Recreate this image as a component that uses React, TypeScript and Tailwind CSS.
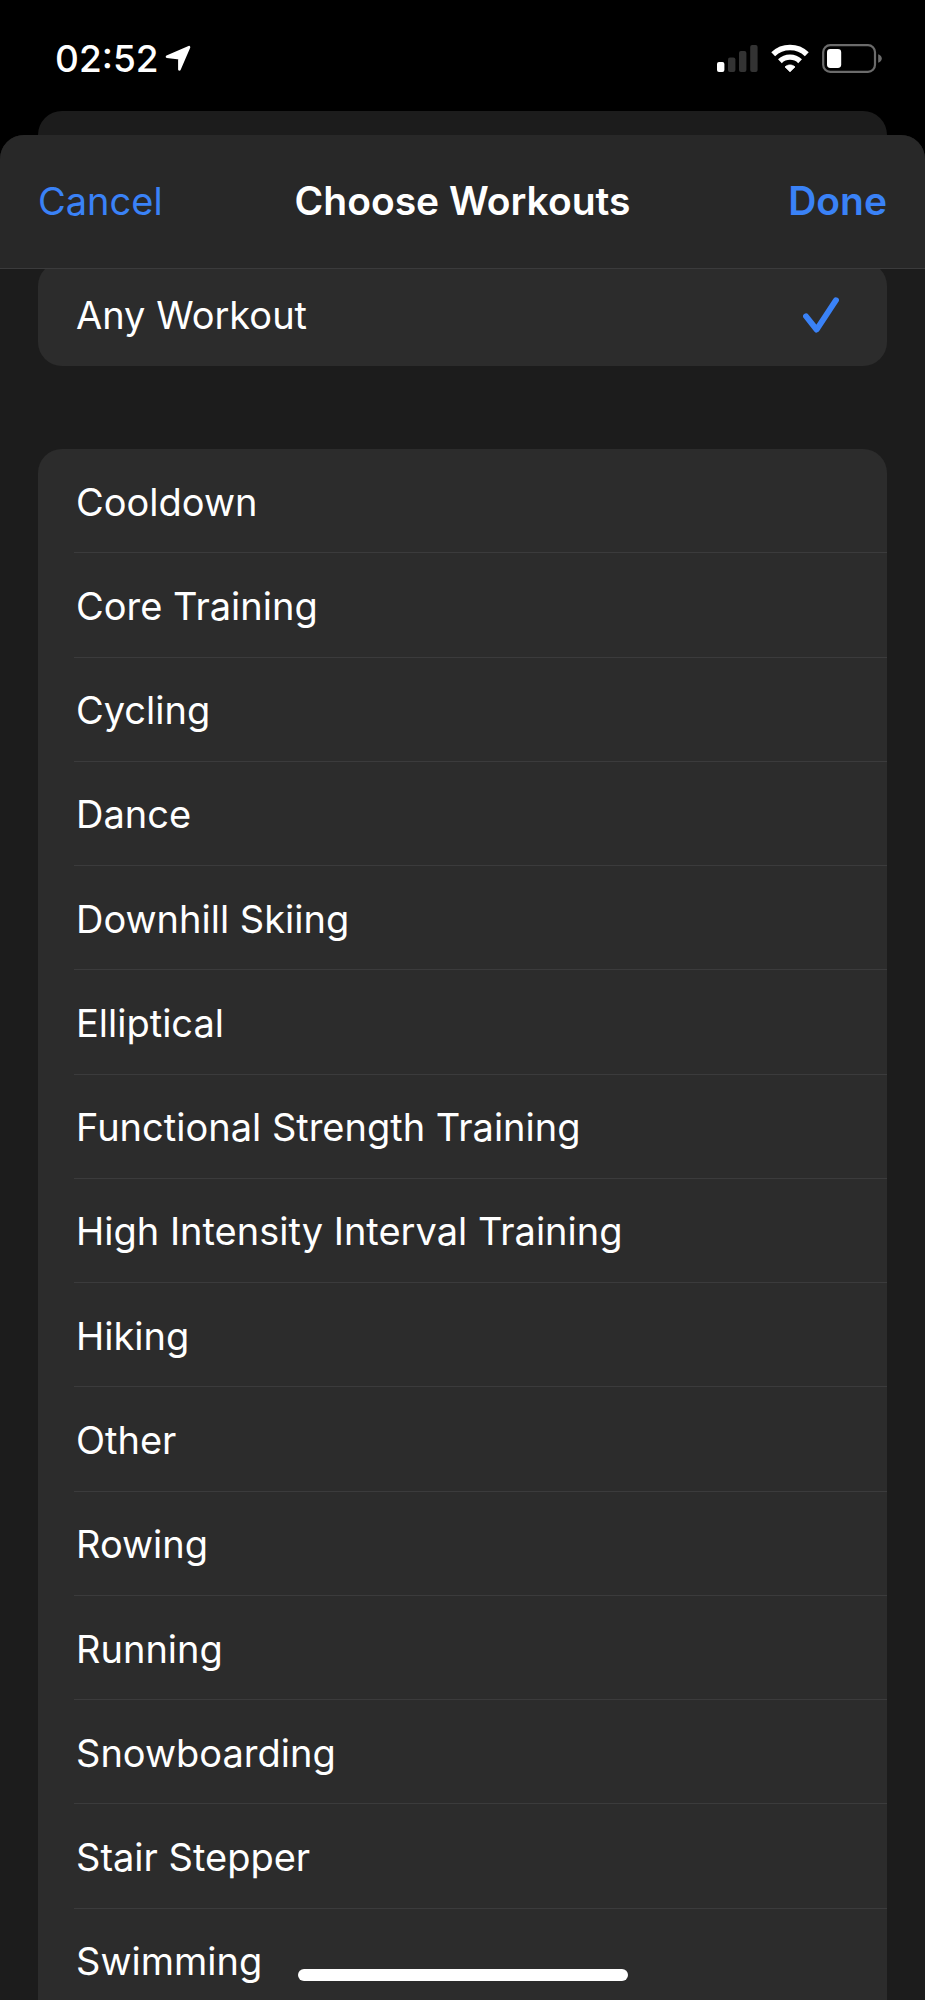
import { useState } from "react";

const ANY = "Any Workout";

const WORKOUTS = [
  "Cooldown",
  "Core Training",
  "Cycling",
  "Dance",
  "Downhill Skiing",
  "Elliptical",
  "Functional Strength Training",
  "High Intensity Interval Training",
  "Hiking",
  "Other",
  "Rowing",
  "Running",
  "Snowboarding",
  "Stair Stepper",
  "Swimming",
];

function LocationArrow() {
  return (
    <svg width="26" height="27" viewBox="0 0 26 27" aria-hidden="true">
      <path
        d="M2 11.6 24 2.2 14.4 24.4V13.2Z"
        fill="white"
        stroke="white"
        strokeWidth="2.6"
        strokeLinejoin="round"
      />
    </svg>
  );
}

function SignalBars() {
  return (
    <svg width="41" height="29" viewBox="0 0 41 29" aria-hidden="true">
      <rect x="0" y="18" width="7.4" height="10" rx="2" fill="white" />
      <rect x="11" y="13.6" width="7.4" height="14.4" rx="2" fill="#333333" />
      <rect x="22" y="7" width="7.4" height="21" rx="2" fill="#333333" />
      <rect x="33.2" y="1" width="7.4" height="27" rx="2" fill="#333333" />
    </svg>
  );
}

function WifiIcon() {
  return (
    <svg width="38" height="29" viewBox="0 0 38 29" fill="none" aria-hidden="true">
      <path d="M2.2 10.2A24.4 24.4 0 0 1 35.8 10.2" stroke="white" strokeWidth="5.6" />
      <path d="M8.9 17.2A14.6 14.6 0 0 1 29.1 17.2" stroke="white" strokeWidth="5.4" />
      <path
        d="M14 22.9C17 20.3 21 20.3 24 22.9L19 27.8Z"
        fill="white"
        stroke="white"
        strokeWidth="0.8"
        strokeLinejoin="round"
      />
    </svg>
  );
}

function BatteryIcon() {
  return (
    <svg width="60" height="29" viewBox="0 0 60 29" fill="none" aria-hidden="true">
      <rect x="1.2" y="1.2" width="51.8" height="26.6" rx="7" stroke="#6b6b6b" strokeWidth="2.2" />
      <rect x="5" y="5" width="14.2" height="19" rx="3.4" fill="white" />
      <path d="M56.2 10.2C58.6 11 59.8 12.8 59.8 14.5S58.6 18 56.2 18.8Z" fill="#6b6b6b" />
    </svg>
  );
}

function Checkmark() {
  return (
    <svg width="36" height="36" viewBox="0 0 36 36" fill="none" aria-hidden="true">
      <path
        d="M3 19.2 13.6 32.6 33 3.2"
        stroke="#3a82f7"
        strokeWidth="5.8"
        strokeLinecap="round"
        strokeLinejoin="round"
      />
    </svg>
  );
}

function WorkoutRow({
  name,
  checked,
  divider,
  onSelect,
}: {
  name: string;
  checked: boolean;
  divider: boolean;
  onSelect: () => void;
}) {
  return (
    <li className="flex min-h-[104px] flex-1 pl-9">
      <button
        type="button"
        aria-pressed={checked}
        onClick={onSelect}
        className={`flex flex-1 items-center justify-between pt-0.5 pr-12 pl-0.5 text-left ${
          divider ? "border-b border-[#3b3b3c]" : ""
        }`}
      >
        <span>{name}</span>
        {checked && <Checkmark />}
      </button>
    </li>
  );
}

export default function App() {
  const [selected, setSelected] = useState(ANY);

  return (
    <div className="flex h-screen flex-col overflow-hidden bg-black font-['Inter','Liberation_Sans',sans-serif] text-[38px] leading-[48px] text-white">
      <div className="flex shrink-0 items-center justify-between pt-11 pr-[43px] pb-[38px] pl-[55px]">
        <div className="flex h-[29px] items-center gap-1.5">
          <span className="text-[37px] font-medium">02:52</span>
          <LocationArrow />
        </div>
        <div className="flex h-[29px] items-center gap-[13px]">
          <SignalBars />
          <WifiIcon />
          <BatteryIcon />
        </div>
      </div>

      {/* edge of the sheet underneath */}
      <div className="mx-[38px] h-12 shrink-0 rounded-t-3xl bg-[#1c1c1c]" />

      <div className="-mt-6 flex min-h-0 flex-1 flex-col overflow-hidden rounded-t-3xl bg-[#1c1c1c]">
        <header className="z-10 grid h-[134px] shrink-0 grid-cols-[1fr_auto_1fr] items-center border-b border-[#3b3b3c] bg-[#282828] px-[38px] pb-0.5">
          <button type="button" className="justify-self-start text-[#3a82f7]">
            Cancel
          </button>
          <h1 className="text-[39px] font-semibold">Choose Workouts</h1>
          <button
            type="button"
            className="justify-self-end text-[39px] font-semibold text-[#3a82f7]"
          >
            Done
          </button>
        </header>

        <main className="-mt-[7px] flex flex-1 flex-col gap-[83px] px-[38px]">
          <ul className="flex flex-col rounded-3xl bg-[#2c2c2c]">
            <WorkoutRow
              name={ANY}
              checked={selected === ANY}
              divider={false}
              onSelect={() => setSelected(ANY)}
            />
          </ul>

          {/* the list runs on past the bottom of the screen */}
          <ul className="-mb-[13px] flex flex-1 flex-col rounded-t-3xl bg-[#2c2c2c]">
            {WORKOUTS.map((name) => (
              <WorkoutRow
                key={name}
                name={name}
                checked={selected === name}
                divider
                onSelect={() => setSelected(name)}
              />
            ))}
          </ul>
        </main>
      </div>

      <div className="fixed inset-x-0 bottom-[19px] z-20 mx-auto h-3 w-[330px] rounded-full bg-white" />
    </div>
  );
}
